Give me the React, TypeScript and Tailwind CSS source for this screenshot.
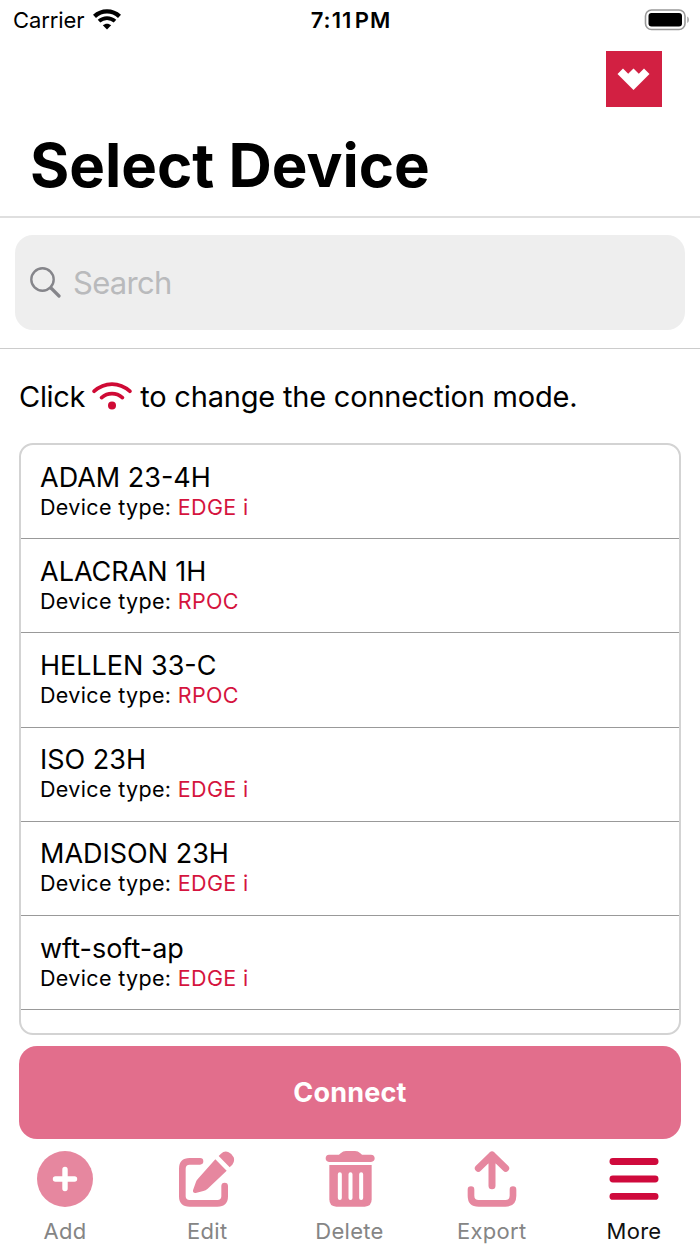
import React from "react";

interface IDevice {
  name: string;
  type: string;
}

const devices: IDevice[] = [
  { name: "ADAM 23-4H", type: "EDGE i" },
  { name: "ALACRAN 1H", type: "RPOC" },
  { name: "HELLEN 33-C", type: "RPOC" },
  { name: "ISO 23H", type: "EDGE i" },
  { name: "MADISON 23H", type: "EDGE i" },
  { name: "wft-soft-ap", type: "EDGE i" },
];

const StatusBar = () => (
  <div className="grid h-[39px] shrink-0 grid-cols-3 items-center pl-[13px] pr-[11px] text-[22px] leading-none">
    <div className="flex items-center gap-[9px]">
      <span className="tracking-[-0.1px]">Carrier</span>
      <svg className="h-[21px] w-[28px]" viewBox="0 0 28 21" fill="none">
        <path d="M1.5 7.3C8.7.7 19.3.7 26.5 7.3" stroke="#000" strokeWidth="4.4" />
        <path d="M6 12.2c4.7-4.2 11.3-4.2 16 0" stroke="#000" strokeWidth="3.8" />
        <path d="M14 20.5l-4.2-4.2c2.4-2.2 6-2.2 8.4 0z" fill="#000" />
      </svg>
    </div>
    <span className="text-center font-semibold tracking-[1px] [word-spacing:-4px]">7:11 PM</span>
    <svg className="h-[22px] w-[45px] justify-self-end" viewBox="0 0 45 22" fill="none">
      <rect x="1.5" y="1" width="39.5" height="19.5" rx="6" stroke="#999" strokeWidth="1.6" />
      <rect x="4.5" y="4" width="33.5" height="13.5" rx="3" fill="#000" />
      <path d="M43.3 7.5c2 .8 2 5.7 0 6.5z" fill="#999" />
    </svg>
  </div>
);

const Logo = () => (
  <svg className="h-[56px] w-[56px]" viewBox="0 0 56 56">
    <rect width="56" height="56" fill="#d22042" />
    <path d="M11.5 23l5.5-5.5 5.2 5.2 5.3-5.2 5.3 5.2 5.2-5.2 5.5 5.5-16 16z" fill="#fff" />
  </svg>
);

const WifiIcon = () => (
  <svg className="h-[29px] w-[40px]" viewBox="0 0 40 29" fill="none" stroke="#cf0a35" strokeLinecap="round">
    <path d="M2.2 10.2c10.5-9.5 25.1-9.5 35.6 0" strokeWidth="3.8" />
    <path d="M9.6 16.6c6.2-5.2 14.6-5.2 20.8 0" strokeWidth="3.8" />
    <circle cx="20" cy="24.5" r="4" fill="#cf0a35" stroke="none" />
  </svg>
);

const AddIcon = () => (
  <svg className="size-[56px]" viewBox="0 0 56 56">
    <circle cx="28" cy="28" r="28" fill="#e6879f" />
    <path d="M28 18.5v19M18.5 28h19" stroke="#fff" strokeWidth="5.4" strokeLinecap="round" />
  </svg>
);

const EditIcon = () => (
  <svg className="size-[56px]" viewBox="0 0 168 168" fill="none">
    <path
      d="M63 31H32Q10 31 10 53v83q0 21 22 21h83q22 0 22-21v-31"
      stroke="#e6879f"
      strokeWidth="20"
      strokeLinecap="round"
    />
    <path d="M109 25l34 34-57 54q-6 5-13 7l-23 6q-9 1-8-8l8-23q2-7 7-12z" fill="#e6879f" />
    <path d="M119 15l7-7q11-10 23-4 11 5 15 15 4 12-4 22l-8 8z" fill="#e6879f" />
  </svg>
);

const DeleteIcon = () => (
  <svg className="size-[56px]" viewBox="0 0 168 168">
    <path
      d="M21 11h30q2-1 5-4 7-7 16-7h27q9 0 16 7 3 3 5 4h27q11 1 11 11t-11 11H21q-10-1-10-11t10-11z"
      fill="#e6879f"
    />
    <path d="M22 42h127v103q0 22-21 22H43q-21 0-21-22z" fill="#e6879f" />
    <path d="M53.5 70v71M85.500 70v71M117.500 70v71" stroke="#fff" strokeWidth="12" strokeLinecap="round" />
  </svg>
);

const ExportIcon = () => (
  <svg
    className="size-[56px]"
    viewBox="0 0 168 168"
    fill="none"
    stroke="#e6879f"
    strokeLinecap="round"
    strokeLinejoin="round"
  >
    <path d="M84 12v92M43 52l41-40 41 40" strokeWidth="21" />
    <path d="M21 116v18q0 23 23 23h80q23 0 23-23v-18" strokeWidth="20" />
  </svg>
);

const MoreIcon = () => (
  <svg className="size-[56px]" viewBox="0 0 56 56" stroke="#cf0a3c" strokeWidth="6.8" strokeLinecap="round">
    <path d="M6.9 10.5h42.2M6.9 28h42.2M6.9 45.4h42.2" />
  </svg>
);

const tabs = [
  { label: "Add", Icon: AddIcon, color: "text-[#858585]" },
  { label: "Edit", Icon: EditIcon, color: "text-[#858585]" },
  { label: "Delete", Icon: DeleteIcon, color: "text-[#858585]" },
  { label: "Export", Icon: ExportIcon, color: "text-[#858585]" },
  { label: "More", Icon: MoreIcon, color: "text-[#111]" },
];

const App = () => {
  return (
    <div className="flex h-[1244px] w-[700px] flex-col overflow-hidden bg-white font-['Inter','Liberation_Sans',sans-serif] text-black">
      <StatusBar />
      <header className="flex h-[179px] shrink-0 flex-col border-b-2 border-[#dfdfdf] pt-[12px]">
        <div className="flex justify-end pr-[38px]">
          <Logo />
        </div>
        <h1 className="mt-[28px] pl-[30px] text-[60px] font-bold leading-[60px]">
          Select Device
        </h1>
      </header>

      <div className="h-[131px] shrink-0 border-b border-[#ccc] px-[15px] pt-[17px]">
        <div className="flex h-[95px] items-center gap-3 rounded-[18px] bg-[#eee] pl-[15px]">
          <svg className="size-[31px]" viewBox="0 0 31 31" fill="none" stroke="#85858a" strokeLinecap="round">
            <circle cx="12.5" cy="12.5" r="11.2" strokeWidth="2.4" />
            <path d="M21 21l8 8" strokeWidth="3.2" />
          </svg>
          <span className="pt-[2px] text-[31px] tracking-[-0.7px] text-[#b9babc]">Search</span>
        </div>
      </div>

      <p className="flex h-[94px] shrink-0 items-center pl-[19px] pt-px text-[29px] tracking-[-0.2px]">
        <span className="tracking-[-0.3px]">Click</span>
        <span className="ml-[7px] mr-2 pb-[3px]">
          <WifiIcon />
        </span>
        <span>to change the connection mode.</span>
      </p>

      <ul className="mx-[19px] h-[592px] shrink-0 overflow-hidden rounded-[14px] border-2 border-[#d3d3d3]">
        {devices.map((device) => (
          <li
            key={device.name}
            className="flex h-[94.2px] flex-col border-b border-[#999] pl-[19px] pt-[16.6px]"
          >
            <span className="text-[27px] leading-[32px]">{device.name}</span>
            <span className="text-[21.5px] leading-[27px] tracking-[0.35px]">
              Device type: <span className="text-[#d5143e]">{device.type}</span>
            </span>
          </li>
        ))}
      </ul>

      <button className="mx-[19px] mt-[11px] h-[93px] shrink-0 rounded-[18px] bg-[#e26e8c] pt-[2px] text-[27px] font-bold tracking-[0.2px] text-white">
        Connect
      </button>

      <nav className="flex shrink-0 justify-between pl-[10px] pr-[11px] pt-[12px]">
        {tabs.map(({ label, Icon, color }) => (
          <div key={label} className="flex w-[110px] flex-col items-center">
            <Icon />
            <span className={`mt-[10px] text-[22px] leading-[28px] tracking-[0.3px] ${color}`}>
              {label}
            </span>
          </div>
        ))}
      </nav>
    </div>
  );
};

export default App;
